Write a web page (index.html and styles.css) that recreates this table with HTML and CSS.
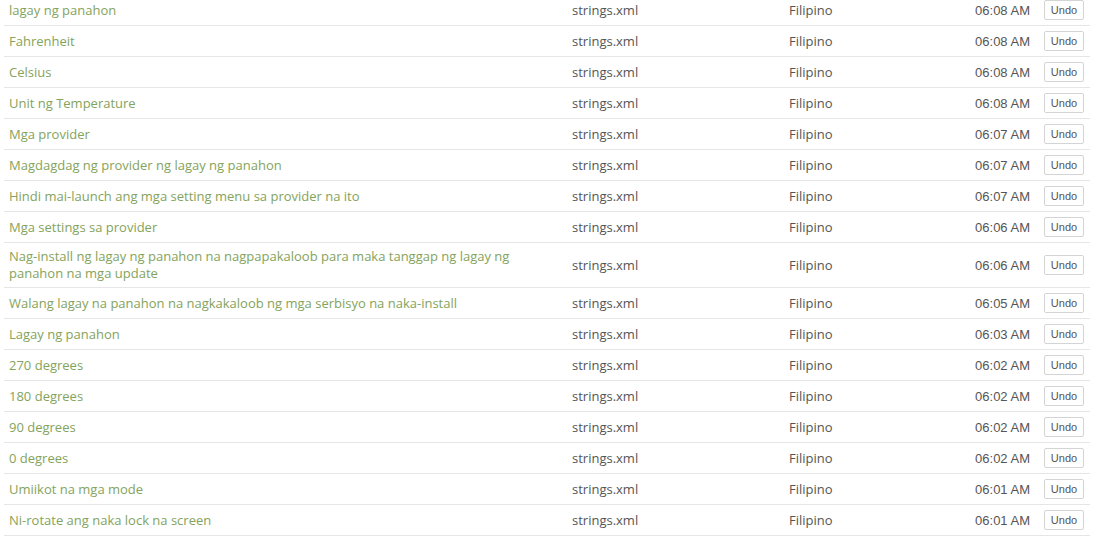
FILE: index.html
```html
<!DOCTYPE html>
<html>
<head>
<meta charset="utf-8">
<link rel="stylesheet" href="styles.css">
</head>
<body>
<div class="wrap">
<table class="log">
<colgroup>
<col class="c-name"><col class="c-file"><col class="c-lang"><col class="c-time"><col class="c-act">
</colgroup>
<tbody>
<tr><td class="name">lagay ng panahon</td><td class="file">strings.xml</td><td class="lang">Filipino</td><td class="time">06:08 AM</td><td class="act"><button class="undo">Undo</button></td></tr>
<tr><td class="name">Fahrenheit</td><td class="file">strings.xml</td><td class="lang">Filipino</td><td class="time">06:08 AM</td><td class="act"><button class="undo">Undo</button></td></tr>
<tr><td class="name">Celsius</td><td class="file">strings.xml</td><td class="lang">Filipino</td><td class="time">06:08 AM</td><td class="act"><button class="undo">Undo</button></td></tr>
<tr><td class="name">Unit ng Temperature</td><td class="file">strings.xml</td><td class="lang">Filipino</td><td class="time">06:08 AM</td><td class="act"><button class="undo">Undo</button></td></tr>
<tr><td class="name">Mga provider</td><td class="file">strings.xml</td><td class="lang">Filipino</td><td class="time">06:07 AM</td><td class="act"><button class="undo">Undo</button></td></tr>
<tr><td class="name">Magdagdag ng provider ng lagay ng panahon</td><td class="file">strings.xml</td><td class="lang">Filipino</td><td class="time">06:07 AM</td><td class="act"><button class="undo">Undo</button></td></tr>
<tr><td class="name">Hindi mai-launch ang mga setting menu sa provider na ito</td><td class="file">strings.xml</td><td class="lang">Filipino</td><td class="time">06:07 AM</td><td class="act"><button class="undo">Undo</button></td></tr>
<tr><td class="name">Mga settings sa provider</td><td class="file">strings.xml</td><td class="lang">Filipino</td><td class="time">06:06 AM</td><td class="act"><button class="undo">Undo</button></td></tr>
<tr><td class="name">Nag-install ng lagay ng panahon na nagpapakaloob para maka tanggap ng lagay ng panahon na mga update</td><td class="file">strings.xml</td><td class="lang">Filipino</td><td class="time">06:06 AM</td><td class="act"><button class="undo">Undo</button></td></tr>
<tr><td class="name">Walang lagay na panahon na nagkakaloob ng mga serbisyo na naka-install</td><td class="file">strings.xml</td><td class="lang">Filipino</td><td class="time">06:05 AM</td><td class="act"><button class="undo">Undo</button></td></tr>
<tr><td class="name">Lagay ng panahon</td><td class="file">strings.xml</td><td class="lang">Filipino</td><td class="time">06:03 AM</td><td class="act"><button class="undo">Undo</button></td></tr>
<tr><td class="name">270 degrees</td><td class="file">strings.xml</td><td class="lang">Filipino</td><td class="time">06:02 AM</td><td class="act"><button class="undo">Undo</button></td></tr>
<tr><td class="name">180 degrees</td><td class="file">strings.xml</td><td class="lang">Filipino</td><td class="time">06:02 AM</td><td class="act"><button class="undo">Undo</button></td></tr>
<tr><td class="name">90 degrees</td><td class="file">strings.xml</td><td class="lang">Filipino</td><td class="time">06:02 AM</td><td class="act"><button class="undo">Undo</button></td></tr>
<tr><td class="name">0 degrees</td><td class="file">strings.xml</td><td class="lang">Filipino</td><td class="time">06:02 AM</td><td class="act"><button class="undo">Undo</button></td></tr>
<tr><td class="name">Umiikot na mga mode</td><td class="file">strings.xml</td><td class="lang">Filipino</td><td class="time">06:01 AM</td><td class="act"><button class="undo">Undo</button></td></tr>
<tr><td class="name">Ni-rotate ang naka lock na screen</td><td class="file">strings.xml</td><td class="lang">Filipino</td><td class="time">06:01 AM</td><td class="act"><button class="undo">Undo</button></td></tr>
</tbody>
</table>
</div>
</body>
</html>
```
FILE: styles.css
```css
html, body {
  margin: 0;
  padding: 0;
  background: #fff;
}
.wrap {
  padding: 0 3px 0 4px;
  margin-top: -5px;
}
.log {
  width: 1086px;
  border-collapse: collapse;
  table-layout: fixed;
  font-family: "Open Sans", sans-serif;
  font-size: 13px;
  color: #555;
}
.c-name { width: 563px; }
.c-file { width: 217px; }
.c-lang { width: 156px; }
.c-time { width: 95px; }
.c-act { width: 55px; }
.log td {
  padding: 5px;
  line-height: 17px;
  vertical-align: middle;
  border-bottom: 1px solid #e6e6e6;
}
.log td.name {
  color: #84a35c;
  padding-right: 45px;
}
.log td.time {
  text-align: right;
  font-family: "Liberation Sans", Arial, sans-serif;
}
.log td.act {
  padding: 5px 6px 5px 9px;
}
.undo {
  display: block;
  width: 40px;
  height: 20px;
  margin: 0;
  padding: 0;
  background: #fff;
  border: 1px solid #d4d4d4;
  border-radius: 2px;
  font-family: "Liberation Sans", Arial, sans-serif;
  font-weight: normal;
  font-size: 11px;
  color: #555;
  line-height: 18px;
  text-align: center;
}
```
